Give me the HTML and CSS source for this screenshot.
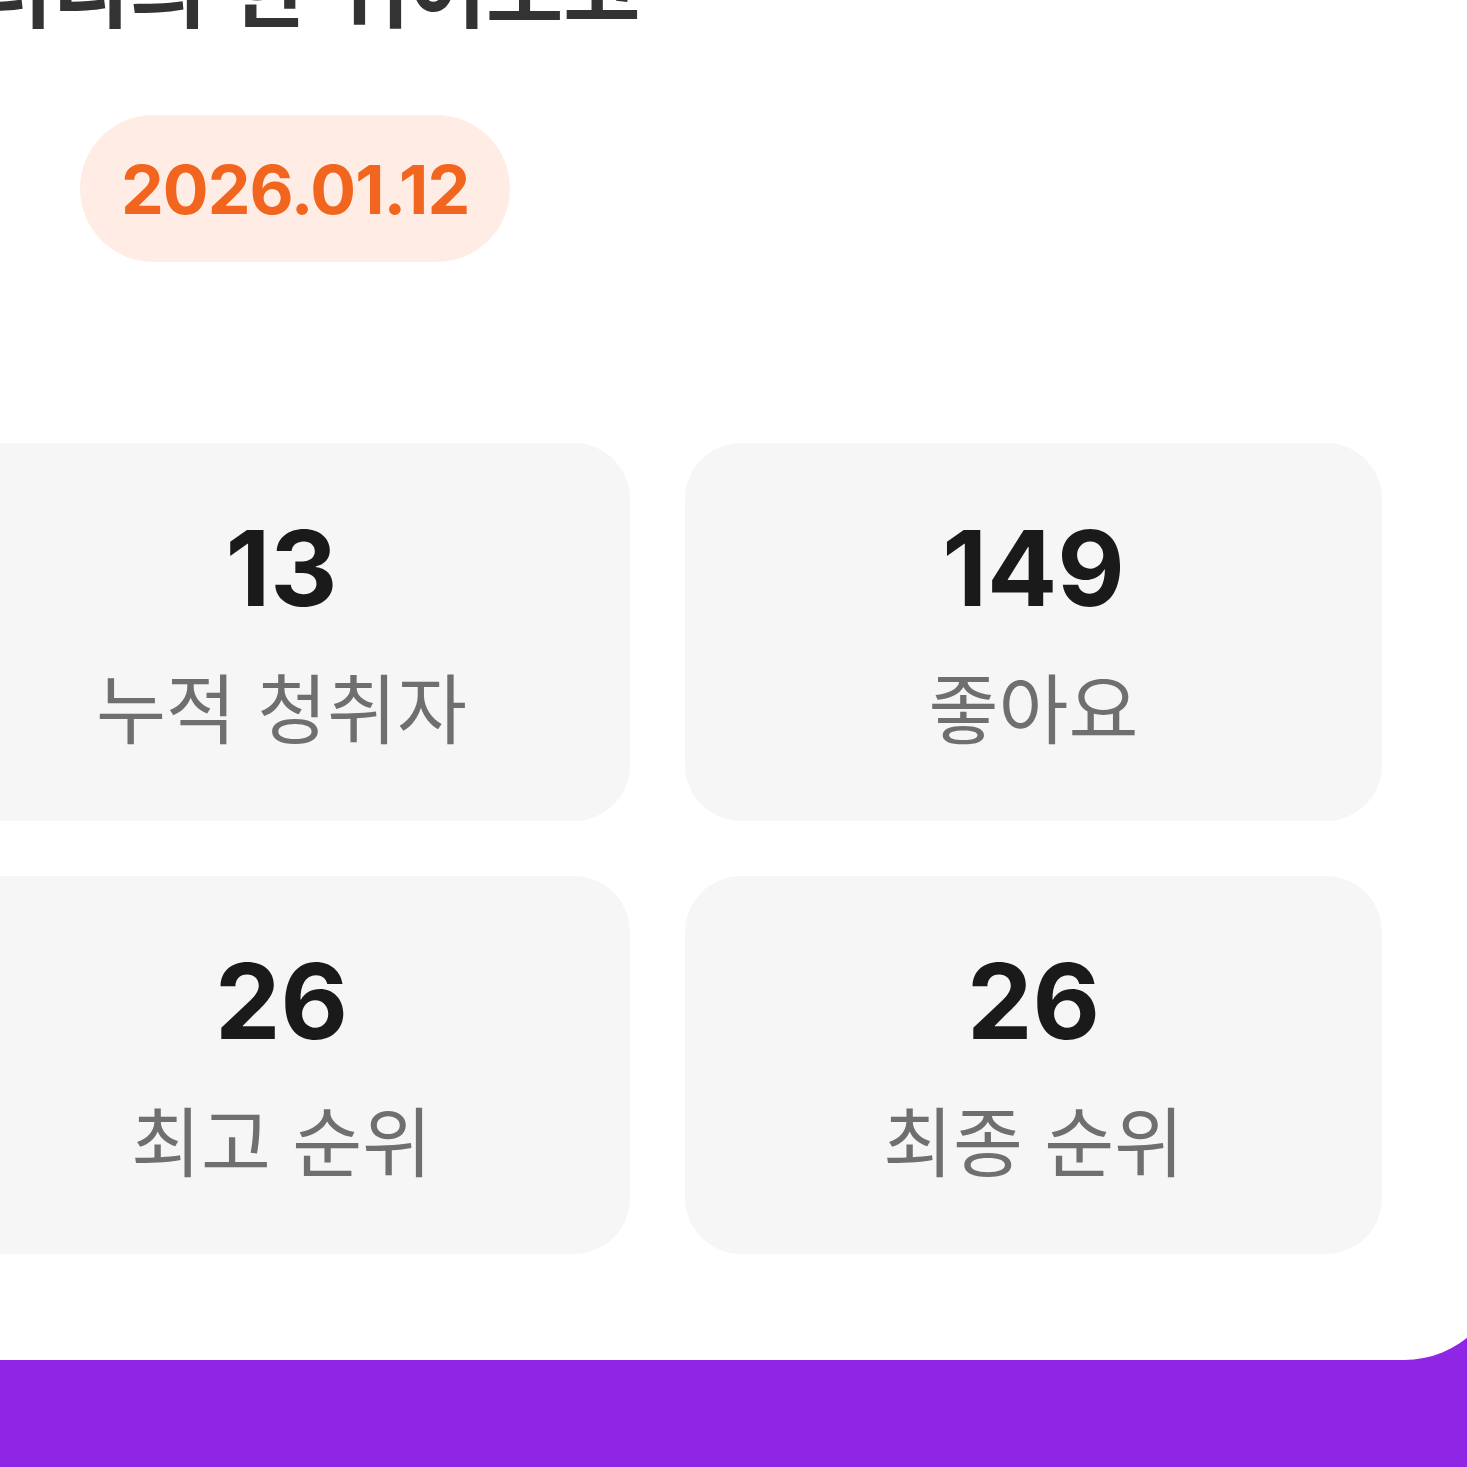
FILE: index.html
```html
<!DOCTYPE html>
<html lang="ko">
<head>
<meta charset="utf-8">
<title>통계</title>
<link rel="stylesheet" href="styles.css">
</head>
<body>
<div class="panel">
  <header class="header">
    <h1 class="title">갤러리의 한 귀여오고</h1>
    <span class="date-badge">2026.01.12</span>
  </header>
  <section class="stats">
    <div class="stat-card">
      <div class="stat-value">13</div>
      <div class="stat-label">누적 청취자</div>
    </div>
    <div class="stat-card">
      <div class="stat-value">149</div>
      <div class="stat-label">좋아요</div>
    </div>
    <div class="stat-card">
      <div class="stat-value">26</div>
      <div class="stat-label">최고 순위</div>
    </div>
    <div class="stat-card">
      <div class="stat-value">26</div>
      <div class="stat-label">최종 순위</div>
    </div>
  </section>
</div>
</body>
</html>
```

FILE: styles.css
```css
html, body {
  margin: 0;
  padding: 0;
}

body {
  background: #8f26e5;
  height: 1467px;
  overflow: hidden;
  font-family: Inter, "Noto Sans CJK KR", sans-serif;
}

.panel {
  box-sizing: border-box;
  width: 1693px;
  height: 1453px;
  margin-top: -93px;
  margin-left: -189px;
  padding: 0 122px;
  background: #ffffff;
  border-radius: 0 0 100px 100px;
}

.header {
  display: flex;
  flex-direction: column;
  align-items: flex-start;
  padding-left: 147px;
}

.title {
  margin: 18px 0 0 -182px;
  font-family: "Noto Sans CJK KR", sans-serif;
  font-size: 84px;
  font-weight: 700;
  line-height: 120px;
  color: #333333;
  white-space: nowrap;
}

.date-badge {
  margin-top: 70px;
  box-sizing: border-box;
  height: 147px;
  padding: 0 41px;
  display: inline-flex;
  align-items: center;
  border-radius: 74px;
  background: #ffede5;
  color: #f2651f;
  font-family: Inter, sans-serif;
  font-size: 68px;
  font-weight: 700;
  letter-spacing: -1px;
}

.stats {
  margin-top: 181px;
  display: grid;
  grid-template-columns: 697px 697px;
  grid-auto-rows: 378px;
  gap: 55px;
}

.stat-card {
  box-sizing: border-box;
  display: flex;
  flex-direction: column;
  align-items: center;
  justify-content: flex-start;
  padding-top: 73px;
  gap: 40px;
  background: #f6f6f6;
  border-radius: 56px;
}

.stat-value {
  font-family: Inter, sans-serif;
  font-size: 104px;
  font-weight: 700;
  line-height: 1;
  color: #1a1a1a;
}

.stat-label {
  font-family: "Noto Sans CJK KR", sans-serif;
  font-size: 76px;
  font-weight: 400;
  line-height: 1.2;
  color: #6f6f6f;
}
```
